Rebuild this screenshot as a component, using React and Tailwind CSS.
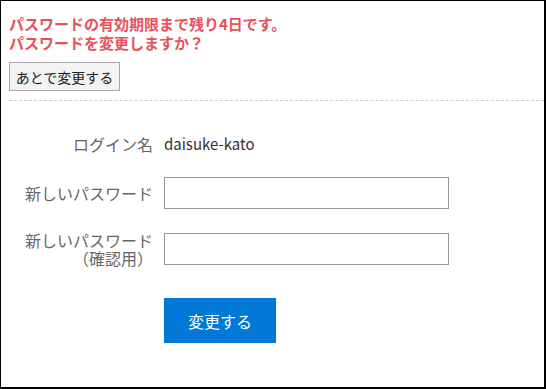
import React from 'react';

const font = { fontFamily: '"Noto Sans CJK JP", "Noto Sans", sans-serif' };

export default function App() {
  return (
    <div style={font} className="w-[546px] h-[389px] border border-black border-r-2 border-b-2 bg-white box-border overflow-hidden">
      {/* warning header */}
      <div className="pl-[8px] pt-[13px]">
        <p className="text-[15px] leading-[19px] font-bold text-[#e8505b]">
          パスワードの有効期限まで残り4日です。
          <br />
          パスワードを変更しますか？
        </p>
        <button className="mt-[10px] h-[29px] w-[111px] border border-[#aaaaaa] bg-[#f3f3f3] text-[14px] text-[#222] leading-none">
          あとで変更する
        </button>
      </div>
      <div className="ml-[8px] mt-[9px] border-t border-dashed border-[#cccccc]" />

      {/* form */}
      <div className="mt-[32px]">
        <div className="flex items-center h-[22px]">
          <div className="w-[152px] text-right text-[16px] text-[#666]">ログイン名</div>
          <div className="ml-[11px] text-[15px] text-[#333]">daisuke-kato</div>
        </div>
        <div className="flex items-center mt-[22px]">
          <label className="w-[152px] text-right text-[16px] text-[#666]">新しいパスワード</label>
          <input type="password" className="ml-[11px] w-[285px] h-[32px] border border-[#999] outline-none" />
        </div>
        <div className="flex items-start mt-[24px]">
          <label className="w-[152px] text-right text-[16px] leading-[18px] text-[#666] -mt-[2px] flex flex-col">
            <span>新しいパスワード</span>
            <span>（確認用）</span>
          </label>
          <input type="password" className="ml-[11px] w-[285px] h-[32px] border border-[#999] outline-none" />
        </div>
        <div className="mt-[31px] pl-[163px]">
          <button className="w-[112px] h-[45px] bg-[#0078d7] text-white text-[16px]">変更する</button>
        </div>
      </div>
    </div>
  );
}
